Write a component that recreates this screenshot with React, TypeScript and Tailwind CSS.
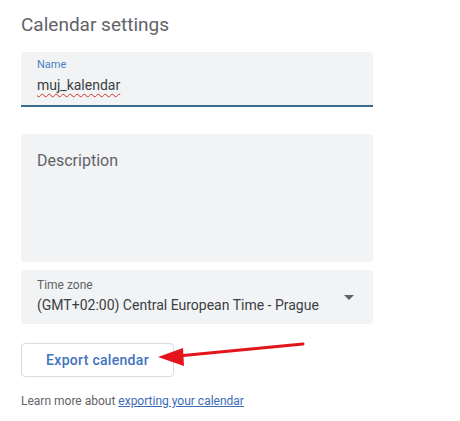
import React from "react";

export default function App() {
  return (
    <div className="relative w-[460px] h-[421px] bg-white font-['Roboto','Liberation_Sans',sans-serif]">
      <div className="pl-[21px] pt-[13px] w-[373px] flex flex-col">
        <h1 className="text-[19px] leading-[24px] text-[#5f6368] font-normal">Calendar settings</h1>

        <div className="mt-[15px] bg-[#f1f3f4] rounded-t-[4px] border-b-2 border-[#3a6a8e] pl-[16px] pt-[5px] pb-[10px] flex flex-col">
          <div className="text-[11px] leading-[16px] text-[#4a7fc4]">Name</div>
          <div className="mt-[2px] text-[14px] leading-[20px] text-[#3c4043]">
            <span className="underline decoration-wavy decoration-[#d93025] decoration-1 underline-offset-[3px]">muj_kalendar</span>
          </div>
        </div>

        <div className="mt-[27px] h-[128px] bg-[#f1f3f4] rounded-[4px] pl-[16px] pt-[15px]">
          <div className="text-[16px] leading-[24px] text-[#5f6368]">Description</div>
        </div>

        <div className="mt-[8px] bg-[#f1f3f4] rounded-[4px] pl-[16px] pr-[19px] pt-[7px] pb-[9px] flex items-center">
          <div className="flex-1 flex flex-col">
            <div className="text-[12px] leading-[16px] text-[#5f6368]">Time zone</div>
            <div className="mt-[2px] text-[14px] leading-[20px] text-[#3c4043]">(GMT+02:00) Central European Time - Prague</div>
          </div>
          <div className="mt-[3px] w-0 h-0 border-l-[5px] border-r-[5px] border-t-[5px] border-l-transparent border-r-transparent border-t-[#5f6368]" />
        </div>

        <div className="mt-[19px] w-[153px] h-[34px] border border-[#dadce0] rounded-[4px] flex items-center justify-center text-[14px] tracking-[0.3px] font-medium text-[#4273c0]">
          Export calendar
        </div>

        <div className="mt-[16px] text-[12px] leading-[16px] text-[#5f6368]">
          Learn more about <span className="text-[#3c6cb4] underline">exporting your calendar</span>
        </div>
      </div>

      <svg className="absolute left-0 top-0 pointer-events-none" width="460" height="421" viewBox="0 0 460 421">
        <line x1="303" y1="344" x2="178" y2="356" stroke="#e3141c" strokeWidth="3" strokeLinecap="round" />
        <polygon points="158,357 183,348 184,366" fill="#e3141c" />
      </svg>
    </div>
  );
}
